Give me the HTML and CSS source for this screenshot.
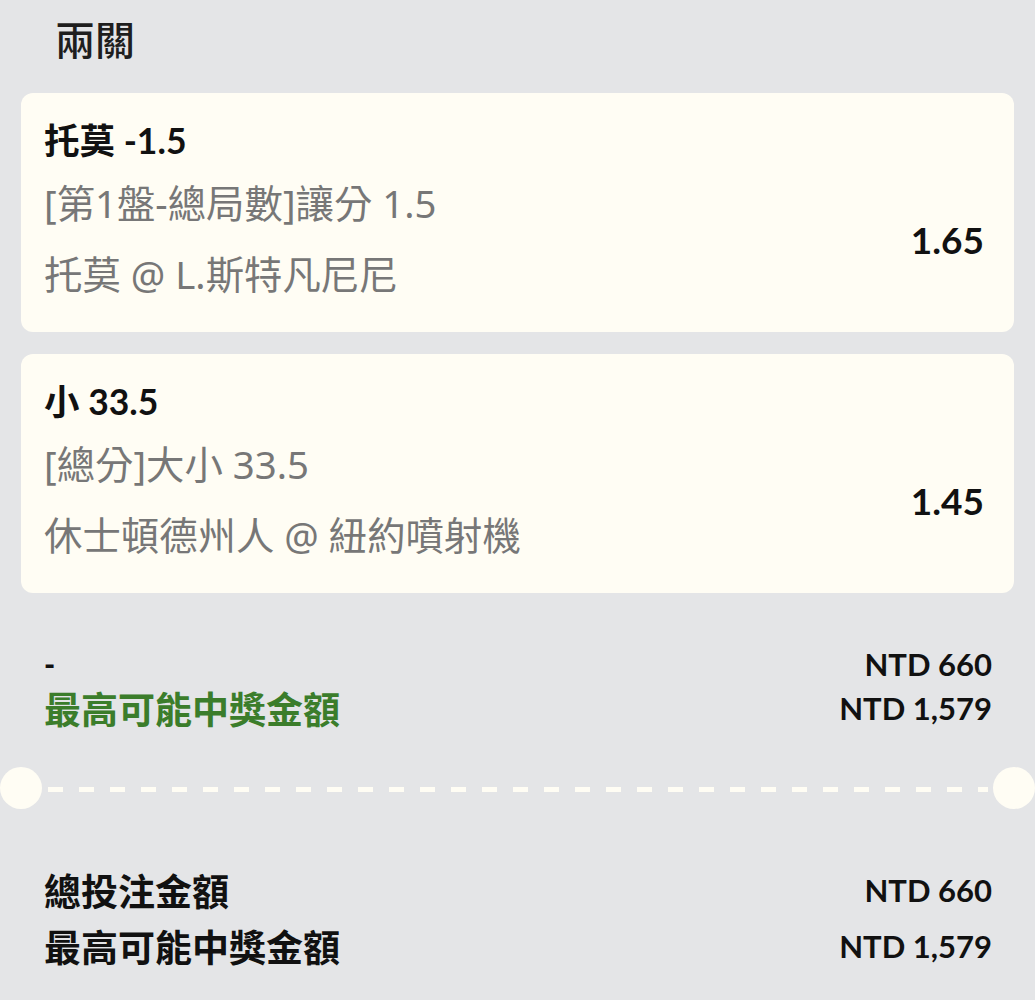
FILE: index.html
```html
<!DOCTYPE html>
<html lang="zh-Hant">
<head>
<meta charset="utf-8">
<link rel="stylesheet" href="styles.css">
</head>
<body>
<div class="page">
  <h1 class="heading">兩關</h1>
  <div class="card">
    <div class="pick">托莫 -1.5</div>
    <div class="market">[第1盤-總局數]讓分 1.5</div>
    <div class="event">托莫 @ L.斯特凡尼尼</div>
    <div class="odds">1.65</div>
  </div>
  <div class="card">
    <div class="pick">小 33.5</div>
    <div class="market">[總分]大小 33.5</div>
    <div class="event">休士頓德州人 @ 紐約噴射機</div>
    <div class="odds">1.45</div>
  </div>
  <div class="summary">
    <div class="row"><span class="dash">-</span><span class="amount">NTD 660</span></div>
    <div class="row"><span class="label green">最高可能中獎金額</span><span class="amount">NTD 1,579</span></div>
  </div>
  <div class="separator">
    <span class="notch"></span>
    <span class="dashes"></span>
    <span class="notch"></span>
  </div>
  <div class="totals">
    <div class="row big"><span class="label">總投注金額</span><span class="amount">NTD 660</span></div>
    <div class="row big"><span class="label">最高可能中獎金額</span><span class="amount">NTD 1,579</span></div>
  </div>
</div>
</body>
</html>
```

FILE: styles.css
```css
html, body {
  margin: 0;
  padding: 0;
  background: #e4e5e7;
}
body {
  font-family: Lato, "Noto Sans CJK TC", sans-serif;
  color: #111;
}
.page {
  width: 1035px;
  height: 1000px;
  overflow: hidden;
}
.heading {
  margin: 0;
  padding: 10px 0 0 55px;
  height: 79px;
  box-sizing: border-box;
  font-family: "Noto Sans CJK TC", sans-serif;
  font-weight: 500;
  font-size: 40px;
  line-height: 56px;
  color: #1e1e1e;
}
.card {
  margin: 14px 21px 0;
  height: 239px;
  box-sizing: border-box;
  background: #fffdf4;
  border-radius: 12px;
  padding: 22px 30px 23px 23px;
  display: grid;
  grid-template-columns: 1fr auto;
  grid-template-rows: 52px 68px 74px;
}
.card + .card {
  margin-top: 22px;
}
.pick {
  grid-column: 1;
  grid-row: 1;
  font-weight: 700;
  font-size: 35.5px;
  line-height: 52px;
  color: #111;
}
.market, .event {
  grid-column: 1;
  font-family: "Noto Sans", "Noto Sans CJK TC", sans-serif;
  font-size: 38.4px;
  color: #777;
  align-self: center;
}
.market { grid-row: 2; }
.event { grid-row: 3; }
.odds {
  grid-column: 2;
  grid-row: 2 / 4;
  align-self: center;
  padding-top: 2px;
  font-weight: 700;
  font-size: 37px;
  color: #111;
}
.summary {
  margin-top: 49px;
  padding: 0 43px 0 44px;
}
.row {
  display: flex;
  justify-content: space-between;
  align-items: center;
  height: 44px;
}
.dash {
  font-weight: 900;
  font-size: 30px;
}
.label {
  font-weight: 700;
  font-size: 37px;
}
.green {
  color: #3b7d2b;
}
.amount {
  font-weight: 700;
  font-size: 31px;
  color: #111;
}
.separator {
  margin-top: 37px;
  height: 42px;
  display: flex;
  align-items: center;
}
.notch {
  width: 42px;
  height: 42px;
  border-radius: 50%;
  background: #fffdf4;
  flex: none;
}
.dashes {
  flex: 1;
  height: 5px;
  margin: 2px 5px 0 6px;
  background: repeating-linear-gradient(90deg, #fffdf4 0 15px, transparent 15px 31px);
}
.totals {
  margin-top: 53px;
  padding: 0 43px 0 44px;
}
.row.big {
  height: 56px;
}
```
